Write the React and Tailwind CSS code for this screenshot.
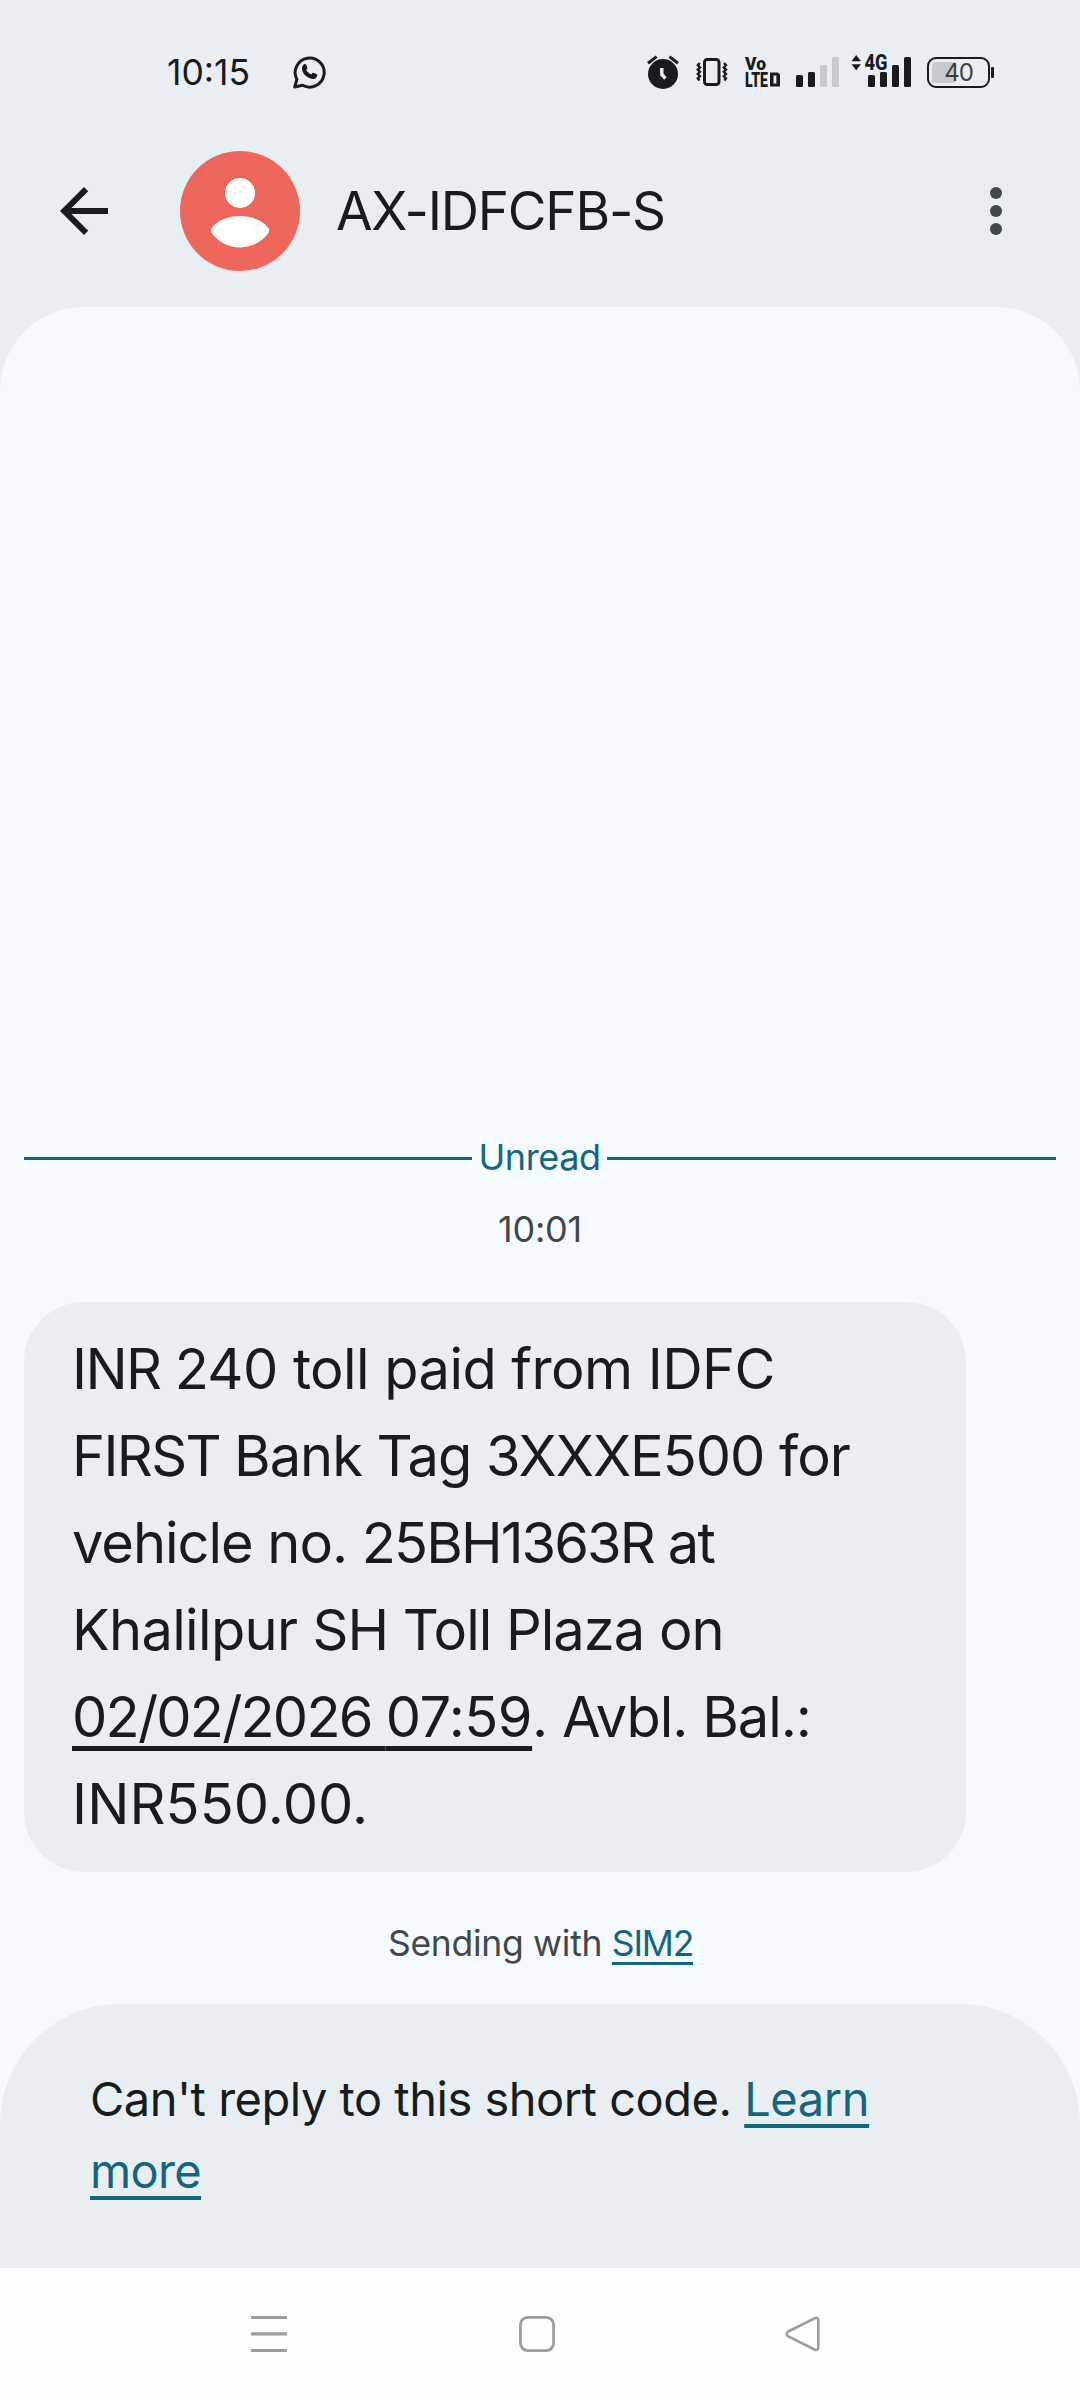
import React from "react";

function WhatsAppIcon() {
  return (
    <svg className="ml-[43px] h-[34px] w-[33px]" viewBox="0 0 33 34" fill="none">
      <path
        d="M1.7 32 L3.9 24.4 A14.5 14.5 0 1 1 9.6 30.2 Z"
        stroke="#191b1c"
        strokeWidth="3"
        strokeLinejoin="round"
      />
      <path
        d="M11.2 9.2c.9-.5 1.8-.2 2.2.8l1 2.4c.3.7.1 1.3-.5 1.9l-.7.8c1.1 2 2.7 3.5 4.9 4.4l1.2-1.3c.5-.5 1-.6 1.6-.3l2.5 1.2c.8.4 1 1 .8 1.8-.6 2.3-3 3.5-5.2 3.1-5.4-1.1-9.4-5.1-10-9.9-.2-2 .7-4 2.2-4.9z"
        fill="#191b1c"
      />
    </svg>
  );
}

function AlarmIcon() {
  return (
    <svg className="h-[34px] w-[32px]" viewBox="0 0 32 34" fill="none" stroke="#191b1c">
      <circle cx="16" cy="19" r="15" fill="#191b1c" stroke="none" />
      <path d="M1 8.2 L9.6 1.6 M31 8.2 L22.4 1.6" strokeWidth="3" />
      <path d="M14.8 13 V19.5 L18.5 23.5" stroke="#e9eef2" strokeWidth="3.4" />
    </svg>
  );
}

function VibrateIcon() {
  return (
    <svg className="ml-[17px] h-[34px] w-[32px]" viewBox="0 0 32 34" fill="none" stroke="#191b1c">
      <rect x="8.5" y="4.5" width="14.5" height="25" rx="2.8" strokeWidth="3" />
      <path
        d="M3.8 8 L1.8 10.2 L4 12.4 L1.8 14.6 L4 16.8 L1.8 19 L4 21.2 L1.8 23.4 L3.5 25.6"
        strokeWidth="2.4"
      />
      <path
        d="M28 8 L30 10.2 L27.8 12.4 L30 14.6 L27.8 16.8 L30 19 L27.8 21.2 L30 23.4 L28.3 25.6"
        strokeWidth="2.4"
      />
    </svg>
  );
}

function VolteIcon() {
  return (
    <svg
      className="ml-[16px] h-[34px] w-[38px] overflow-visible font-['Roboto',sans-serif]"
      viewBox="0 0 38 34"
      fill="#191b1c"
    >
      <text x="1" y="14.6" fontSize="18" fontWeight="900" textLength="21" lengthAdjust="spacingAndGlyphs">
        Vo
      </text>
      <text x="1" y="31.5" fontSize="20" fontWeight="900" textLength="23" lengthAdjust="spacingAndGlyphs">
        LTE
      </text>
      <path
        fillRule="evenodd"
        d="M26 17.5 H34 L36 19.5 V31.5 H26 Z M29.5 20.5 V28.5 H32.4 V20.5 Z"
      />
    </svg>
  );
}

const SIGNAL_ONE = [
  { id: "a", cls: "h-[12px] bg-[#191b1c]" },
  { id: "b", cls: "h-[15px] bg-[#191b1c]" },
  { id: "c", cls: "h-[22px] bg-[#c6cacd]" },
  { id: "d", cls: "h-[30px] bg-[#c6cacd]" },
];

const SIGNAL_TWO = [
  { id: "a", cls: "h-[12px] bg-[#191b1c]" },
  { id: "b", cls: "h-[15px] bg-[#191b1c]" },
  { id: "c", cls: "h-[22px] bg-[#191b1c]" },
  { id: "d", cls: "h-[30px] bg-[#191b1c]" },
];

function SignalBars({ bars }) {
  return (
    <div className="flex h-[30px] items-end gap-[5px]">
      {bars.map((bar) => (
        <div key={bar.id} className={`w-[7px] rounded-[1.5px] ${bar.cls}`} />
      ))}
    </div>
  );
}

function NetworkBadge() {
  return (
    <svg
      className="absolute -top-[3px] -left-[17px] h-[18px] w-[38px] overflow-visible font-['Roboto',sans-serif]"
      viewBox="0 0 38 18"
      fill="#191b1c"
    >
      <path d="M0.5 7.3 L5.2 1 L10 7.3 Z M0.5 10.3 H10 L5.2 16.3 Z" />
      <text
        x="13.5"
        y="16"
        fontSize="21.5"
        fontWeight="800"
        textLength="23"
        lengthAdjust="spacingAndGlyphs"
        stroke="#e9eef2"
        strokeWidth="2"
        paintOrder="stroke"
      >
        4G
      </text>
    </svg>
  );
}

function Battery() {
  return (
    <div className="ml-[16px] flex items-center">
      <div className="relative h-[31px] w-[63px] rounded-[9px] border-[2.5px] border-[#191b1c] p-[3px]">
        <div className="h-[21px] w-[23px] rounded-l-[4px] bg-[#c6cacd]" />
        <div className="absolute inset-0 flex items-center justify-center font-['Inter',sans-serif] text-[24px] leading-none tracking-[-1px] text-[#3b3e40]">
          40
        </div>
      </div>
      <div className="ml-[1px] h-[11px] w-[3px] rounded-[1px] bg-[#191b1c]" />
    </div>
  );
}

function StatusBar() {
  return (
    <div className="flex h-[115px] shrink-0 justify-between pr-[86px] pl-[167px]">
      <div className="mt-[55px] flex h-[34px] items-center">
        <div className="mt-[2px] w-[83px] text-[35.5px] leading-[40px] text-[#191b1c]">10:15</div>
        <WhatsAppIcon />
      </div>
      <div className="mt-[55px] flex h-[34px] items-start">
        <AlarmIcon />
        <VibrateIcon />
        <VolteIcon />
        <div className="mt-[2px] ml-[14px]">
          <SignalBars bars={SIGNAL_ONE} />
        </div>
        <div className="relative mt-[2px] ml-[29px]">
          <SignalBars bars={SIGNAL_TWO} />
          <NetworkBadge />
        </div>
        <div className="mt-[2px]">
          <Battery />
        </div>
      </div>
    </div>
  );
}

function Header() {
  return (
    <header className="flex h-[192px] shrink-0 items-center pr-[78px] pl-[48px]">
      <svg className="h-[72px] w-[72px]" viewBox="0 0 24 24" fill="#171d1f">
        <path d="M20 11H7.83l5.59-5.59L12 4l-8 8 8 8 1.41-1.41L7.83 13H20v-2z" />
      </svg>
      <svg className="ml-[60px] h-[120px] w-[120px]" viewBox="0 0 120 120">
        <circle cx="60" cy="60" r="60" fill="#ee675c" />
        <circle cx="60" cy="42" r="15" fill="#fff" />
        <path
          d="M32 82.5 C30.5 80.5 30.5 78.5 32 76.5 C38 69 49 65 60 65 S82 69 88 76.5 C89.5 78.5 89.5 80.5 88 82.5 C81.5 91 71.5 96.5 60 96.5 S38.5 91 32 82.5 Z"
          fill="#fff"
        />
      </svg>
      <h1 className="ml-[36px] flex-1 text-[53px] leading-[64px] tracking-[-1.2px] whitespace-nowrap">
        AX-IDFCFB-S
      </h1>
      <div className="flex flex-col gap-[6px]">
        <span className="h-[12px] w-[12px] rounded-full bg-[#41484b]" />
        <span className="h-[12px] w-[12px] rounded-full bg-[#41484b]" />
        <span className="h-[12px] w-[12px] rounded-full bg-[#41484b]" />
      </div>
    </header>
  );
}

function Message() {
  return (
    <div className="mt-[36px] ml-[24px] h-[570px] w-[942px] rounded-[60px] bg-[#e9eef2] pt-[24px] pl-[48px] text-[56px] leading-[87px] whitespace-nowrap">
      <div className="tracking-[-0.57px]">
        <span className="tracking-[-1.6px]">INR </span>240 toll paid from IDFC
      </div>
      <div className="tracking-[-1.02px]">
        <span className="tracking-[-1.66px]">FIRST </span>Bank Tag 3XXXE500 for
      </div>
      <div className="tracking-[-1.88px]">
        <span className="tracking-[-1.04px]">vehicle no. </span>25BH1363R at
      </div>
      <div className="tracking-[-1px]">
        <span className="tracking-[-0.66px]">Khalilpur </span>SH Toll Plaza on
      </div>
      <div className="tracking-[-1.02px]">
        <span className="tracking-[-0.5px] underline decoration-[5px] underline-offset-[9px] [text-decoration-skip-ink:none]">
          <span className="tracking-[-1.8px]">02/02/2026 </span>07:59
        </span>
        . Avbl. Bal.:
      </div>
      <div className="tracking-[0.1px]">INR550.00.</div>
    </div>
  );
}

function Conversation() {
  return (
    <main className="flex flex-1 flex-col rounded-t-[84px] bg-[#f5faff]">
      <div className="mt-[827px] flex h-[48px] items-center px-[24px]">
        <div className="h-[3px] w-[448px] bg-[#12677f]" />
        <div className="mb-[2px] flex-1 text-center text-[36px] leading-[48px] tracking-[-0.4px] text-[#12677f]">
          Unread
        </div>
        <div className="h-[3px] w-[449px] bg-[#12677f]" />
      </div>
      <div className="mt-[23px] h-[61px] text-center text-[36px] leading-[48px] tracking-[-0.25px] text-[#444749]">
        10:01
      </div>
      <Message />
      <div className="mt-[47px] h-[85px] pl-[388px] text-[35.5px] leading-[49px] tracking-[-0.3px] whitespace-pre text-[#444749]">
        Sending with{" "}
        <span className="tracking-[-1.2px] text-[#12677f] underline decoration-[3px] underline-offset-[6px] [text-decoration-skip-ink:none]">
          SIM2
        </span>
      </div>
      <div className="h-[264px] rounded-t-[120px] bg-[#e9eef2] pt-[59px] pl-[90px] text-[47px] leading-[72px] whitespace-nowrap">
        <div className="tracking-[-0.5px]">
          Can't reply to this short code.{" "}
          <span className="tracking-[-0.4px] text-[#12677f] underline decoration-[4px] underline-offset-[8px] [text-decoration-skip-ink:none]">
            Learn
          </span>
        </div>
        <div>
          <span className="tracking-[-0.65px] text-[#12677f] underline decoration-[4px] underline-offset-[8px] [text-decoration-skip-ink:none]">
            more
          </span>
        </div>
      </div>
    </main>
  );
}

function NavBar() {
  return (
    <nav className="flex h-[132px] shrink-0 gap-[232px] bg-[#fdfdfd] pt-[48px] pl-[251px]">
      <svg className="h-[36px] w-[36px]" viewBox="0 0 36 36" fill="#9d9d9d">
        <rect x="0" y="0" width="36" height="3" rx="0.5" />
        <rect x="0" y="16.3" width="36" height="3.2" rx="0.5" />
        <rect x="0" y="33" width="36" height="3" rx="0.5" />
      </svg>
      <svg className="h-[36px] w-[36px]" viewBox="0 0 36 36" fill="none">
        <rect x="1.4" y="1.4" width="33.2" height="33.2" rx="7.5" stroke="#9d9d9d" strokeWidth="2.8" />
      </svg>
      <svg className="-ml-[2px] h-[36px] w-[36px]" viewBox="0 0 36 36" fill="none">
        <path
          d="M29.5 2.3 L3.3 15.5 C1.2 16.8 1.2 19 3.3 20.3 L29.5 33.5 C31.5 34.5 33.3 33.5 33.3 31.5 V4.3 C33.3 2.3 31.5 1.3 29.5 2.3 Z"
          stroke="#9d9d9d"
          strokeWidth="2.6"
        />
      </svg>
    </nav>
  );
}

export default function App() {
  return (
    <div className="flex h-[2400px] w-[1080px] flex-col overflow-hidden bg-[#e9eef2] font-['Inter',sans-serif] text-[#171d1f]">
      <StatusBar />
      <Header />
      <Conversation />
      <NavBar />
    </div>
  );
}
